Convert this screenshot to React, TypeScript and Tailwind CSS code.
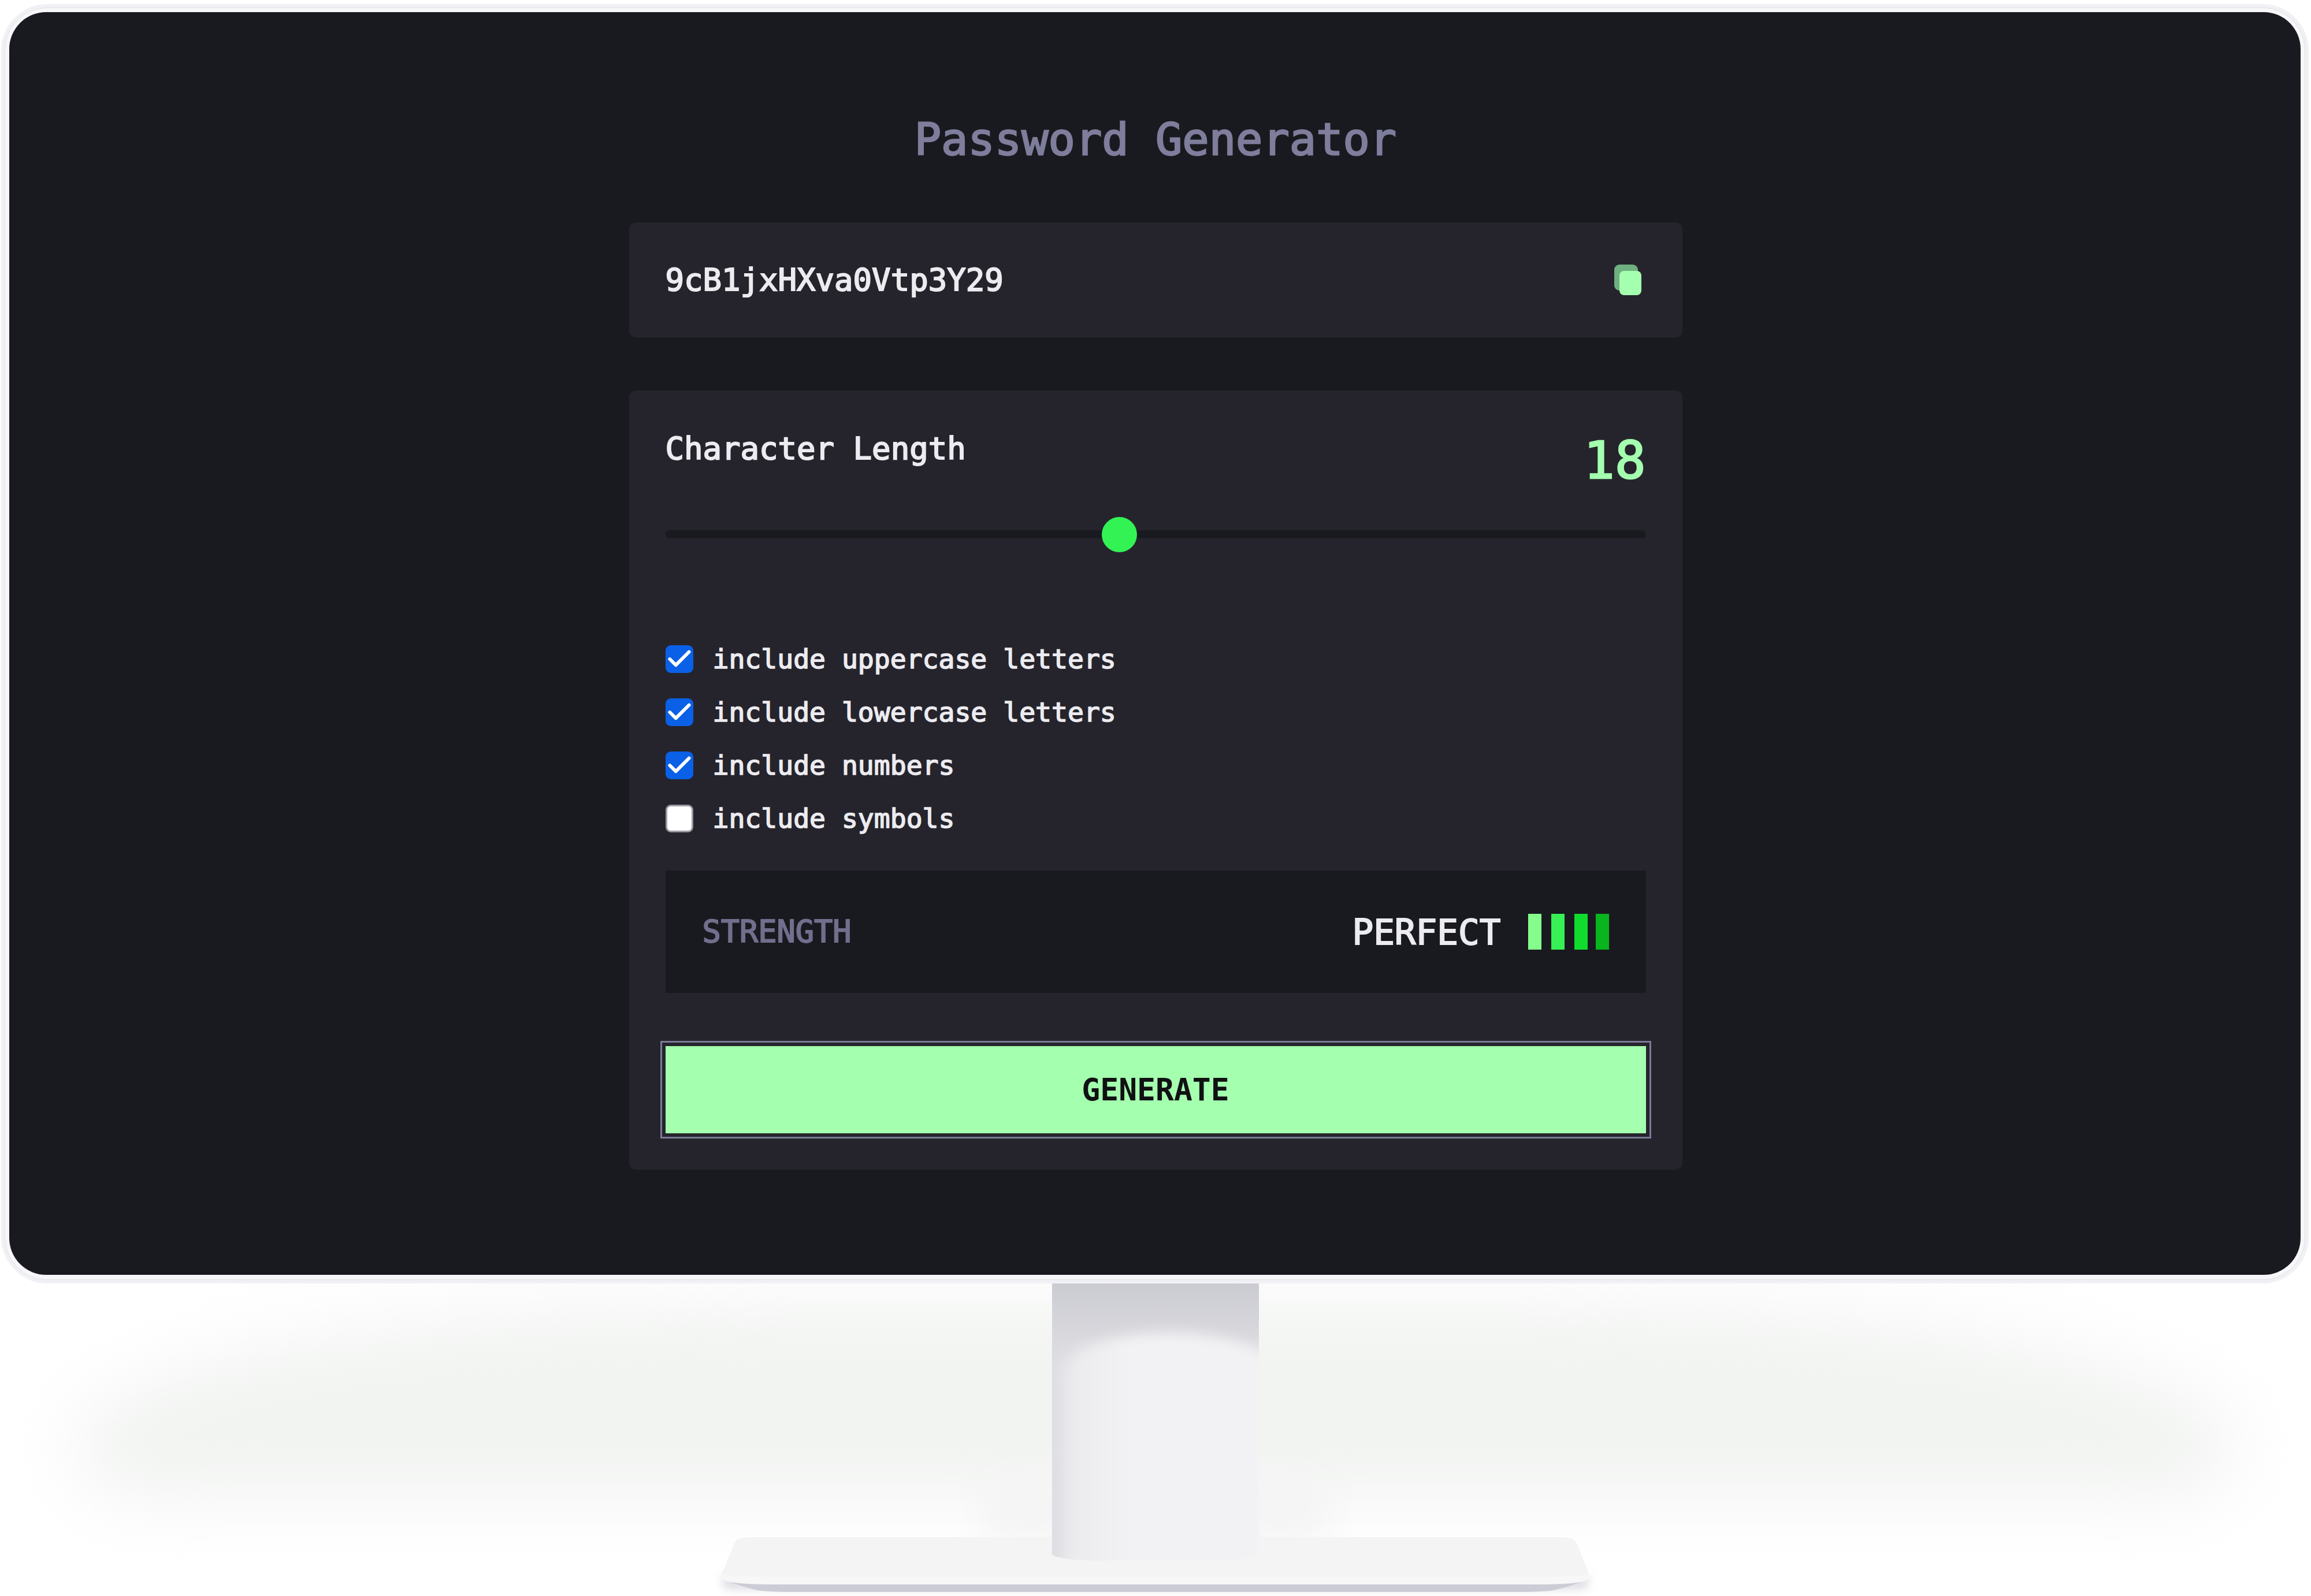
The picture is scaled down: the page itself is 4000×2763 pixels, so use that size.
import { Check } from "lucide-react";

const options = [
  { label: "include uppercase letters", checked: true },
  { label: "include lowercase letters", checked: true },
  { label: "include numbers", checked: true },
  { label: "include symbols", checked: false },
];

const bars = ["bg-[#85fd8d]", "bg-[#36f055]", "bg-[#0fdc2d]", "ml-[-3px] bg-[#08b51d]"];

function Stand() {
  return (
    <div className="relative z-0 h-[534px] w-full">
      {/* soft shadow behind the stand */}
      <div className="absolute left-[120px] top-[30px] h-[350px] w-[3760px] rounded-[1500px_1500px_200px_200px/320px_320px_120px_120px] bg-[#f2f4f2] blur-[60px]" />
      <div className="absolute left-[1700px] top-[340px] h-[110px] w-[600px] rounded-[60px] bg-[#f3f4f3] blur-[30px]" />
      <div className="absolute left-[1250px] top-[505px] h-[24px] w-[1500px] rounded-[20px] bg-[#dcdce3] blur-[8px]" />

      <svg className="absolute left-[1240px] top-[430px]" width="1520" height="104" viewBox="0 0 1520 104" fill="none">
        <path d="M12 82 Q40 94 70 101 Q90 104 130 104 H1390 Q1430 104 1450 101 Q1480 94 1508 82 Z" fill="#cbccd5" />
        <path d="M32 18 Q34 9 70 9 H1450 Q1486 9 1488 18 L1511 74 Q1513 84 1495 87 Q1470 91 1420 91 H100 Q50 91 25 87 Q7 84 9 74 Z" fill="#f7f7f8" />
        <path d="M32 18 Q34 9 70 9 H1450 Q1486 9 1488 18 L1511 74 Q1470 78 1420 78 H100 Q50 78 9 74 Z" fill="#f4f4f5" />
      </svg>

      {/* neck */}
      <div className="absolute left-[1821px] top-0 h-[480px] w-[358px] overflow-hidden rounded-b-[90px_12px] bg-gradient-to-r from-[#dedee3] via-[#ececef] via-15% to-[#f3f3f5] to-40%">
        <div className="h-[150px] bg-gradient-to-b from-[#cbccd2] via-[#d8d8dd] via-60% to-transparent" />
        <div className="absolute left-[30px] top-[85px] h-[420px] w-[345px] rounded-t-[172px_62px] bg-gradient-to-r from-[#ebebee] to-[#f2f2f4] to-30% blur-[12px]" />
      </div>
    </div>
  );
}

export default function App() {
  return (
    <div className="h-[2763px] w-[4000px] overflow-hidden bg-white pt-[7px] [font-family:'DejaVu_Sans_Mono',monospace]">
      {/* Monitor */}
      <div className="relative z-10 ml-[2px] mr-[4px] h-[2215px] rounded-[80px] bg-[#f1f1f5] p-[6px]">
        <div className="h-full rounded-[74px] border border-[#e0e0e6] bg-[#f7f7f9] px-[7px] pt-[7px] pb-[8px]">
          <div className="flex h-[2186px] flex-col items-center rounded-[64px] bg-[#191a1f] pt-[190px] pl-[2px]">
            <h1 className="text-[77px] leading-[62px] font-normal text-[#7f7d9c] [-webkit-text-stroke:2.5px_#7f7d9c]">Password Generator</h1>

            <div className="mt-[112px] flex h-[199px] w-[1823px] items-center justify-between rounded-[12px] bg-[#25242c] pr-[71px] pl-[63px]">
              <span className="text-[54px] leading-none text-[#ecebf0] [-webkit-text-stroke:2px_#ecebf0]">9cB1jxHXva0Vtp3Y29</span>
              {/* copy icon */}
              <div className="relative h-[53px] w-[47px]">
                <div className="absolute left-0 top-0 h-[45px] w-[41px] rounded-[9px] bg-[#6fb080]" />
                <div className="absolute left-[9px] top-[11px] h-[42px] w-[38px] rounded-[8px] bg-[#a4ffaf]" />
              </div>
            </div>

            <div className="mt-[92px] h-[1349px] w-[1823px] rounded-[12px] bg-[#25242c] px-[63px] pt-[64px]">
              <div className="flex items-start justify-between">
                <span className="text-[54px] leading-[74px] text-[#ecebf0] [-webkit-text-stroke:2px_#ecebf0]">Character Length</span>
                <span className="mt-[12px] text-[89px] leading-[90px] text-[#a4ffaf] [-webkit-text-stroke:2.5px_#a4ffaf]">18</span>
              </div>

              {/* slider */}
              <div className="relative mt-[76px] h-[14px] rounded-full bg-[#191a1f]">
                <div className="absolute left-[755px] top-[-23px] size-[61px] rounded-full bg-[#32f254]" />
              </div>

              <div className="mt-[163px] flex flex-col">
                {options.map((o) => (
                  <label key={o.label} className="flex h-[92px] items-center gap-[34px]">
                    <span
                      className={`flex size-[48px] items-center justify-center rounded-[9px] ${
                        o.checked ? "bg-[#0a60e6]" : "border-[3px] border-[#9b9ba1] bg-white"
                      }`}
                    >
                      {o.checked && <Check size={50} strokeWidth={2.8} className="shrink-0 text-white" />}
                    </span>
                    <span className="text-[46.4px] leading-none text-[#ecebf0] [-webkit-text-stroke:1.6px_#ecebf0]">{o.label}</span>
                  </label>
                ))}
              </div>

              <div className="mt-[44px] flex h-[212px] items-center justify-between bg-[#191a1f] pr-[64px] pl-[64px]">
                <span className="text-[53.6px] leading-none text-[#716f8d] [-webkit-text-stroke:2px_#716f8d]">STRENGTH</span>
                <div className="flex items-center gap-[47px]">
                  <span className="text-[61px] leading-none text-[#ecebf0] [-webkit-text-stroke:2px_#ecebf0]">PERFECT</span>
                  <div className="flex gap-[17px]">
                    {bars.map((b) => (
                      <div key={b} className={`h-[62px] w-[23px] ${b}`} />
                    ))}
                  </div>
                </div>
              </div>

              <button className="mt-[92px] flex h-[151px] w-full items-center justify-center bg-[#a4ffaf] text-[53px] leading-none font-bold text-[#101113] outline-[3px] outline-offset-[6px] outline-[#7c7a98]">
                GENERATE
              </button>
            </div>
          </div>
        </div>
      </div>
      <Stand />
    </div>
  );
}
